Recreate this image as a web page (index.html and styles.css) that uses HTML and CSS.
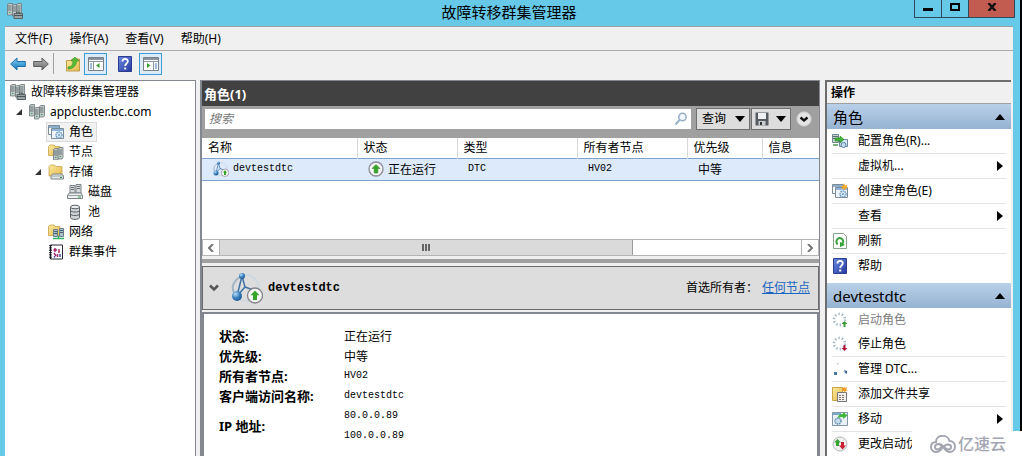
FILE: index.html
```html
<!DOCTYPE html>
<html lang="zh-CN">
<head>
<meta charset="utf-8">
<meta name="viewport" content="width=device-width, initial-scale=1">
<title>故障转移群集管理器</title>
<link rel="stylesheet" href="styles.css">
</head>
<body>
<svg class="sprite" aria-hidden="true">
  <defs>
    <linearGradient id="g-blue" x1="0" y1="0" x2="0" y2="1"><stop offset="0" stop-color="#7fd0f5"/><stop offset="1" stop-color="#1474b8"/></linearGradient>
    <linearGradient id="g-grey" x1="0" y1="0" x2="0" y2="1"><stop offset="0" stop-color="#b5b5b5"/><stop offset="1" stop-color="#6c6c6c"/></linearGradient>
    <linearGradient id="g-fold" x1="0" y1="0" x2="1" y2="1"><stop offset="0" stop-color="#fcecA0"/><stop offset="1" stop-color="#e3b84a"/></linearGradient>
    <linearGradient id="g-help" x1="0" y1="0" x2="1" y2="1"><stop offset="0" stop-color="#6c8be0"/><stop offset="1" stop-color="#2438a0"/></linearGradient>
    <radialGradient id="g-ball" cx=".35" cy=".3" r=".8"><stop offset="0" stop-color="#b8dcf5"/><stop offset=".5" stop-color="#3b82c0"/><stop offset="1" stop-color="#1a4f8c"/></radialGradient>
    <g id="tower"><path d="M.5 1.500 2 .5h3.500v10L4.500 12H.5z" fill="#c3cacb" stroke="#6c7779" stroke-width=".8"/><path d="M1 3h3.500M1 5h3.500M1 7h3.500" stroke="#4f5b5e" stroke-width=".8"/><path d="M2 9.500h1.500" stroke="#35a04a" stroke-width="1.200"/></g>
  </defs>
  <symbol id="i-cluster" viewBox="0 0 16 16"><use href="#tower" x="0" y="0"/><use href="#tower" x="5" y="3"/><use href="#tower" x="10" y="1"/></symbol>
  <symbol id="i-manager" viewBox="0 0 16 16"><use href="#tower" x="0" y="0"/><use href="#tower" x="5" y="1"/><use href="#tower" x="9" y="0"/><path d="M7 10.500h8.500v5H7z" fill="#9aa3a5" stroke="#5a6365"/><path d="M9.500 10.500v-1.500h3.500v1.500M7 12.500h8.500" fill="none" stroke="#4c5557"/></symbol>
  <symbol id="i-roles" viewBox="0 0 16 16"><path d="M.5 1.500h11v9H.5z" fill="#fff" stroke="#7c8b99"/><path d="M1 2h10v2H1z" fill="#8fb0cc"/><path d="M3.500 4.500h12v10h-12z" fill="#eef4fa" stroke="#7c8b99"/><path d="M4 5h11v2H4z" fill="#91b5d8"/><circle cx="11" cy="11" r="3" fill="#d8e8f5" stroke="#6f9cc4" stroke-width="1.500" stroke-dasharray="1.500 .7"/><circle cx="11" cy="11" r="1" fill="#6f9cc4"/></symbol>
  <symbol id="i-newrole" viewBox="0 0 16 16"><use href="#i-roles"/><path d="m12 0 1 2.500 2.500-1-1 2.500 1.500 1-2.500.6-.5 2-1.300-2-2.400.9 1.300-2-2-1.500 2.500-.1z" fill="#f6a625"/></symbol>
  <symbol id="i-nodes" viewBox="0 0 16 16"><path d="M.5 2.500 2 1h4l1 1.500h5v9H.5z" fill="url(#g-fold)" stroke="#c9a14a" stroke-width=".8"/><use href="#tower" x="5" y="4"/><use href="#tower" x="9.500" y="3"/></symbol>
  <symbol id="i-storage" viewBox="0 0 16 16"><path d="M1 2.500 2.500 1h4L8 2.500h6V12H1z" fill="url(#g-fold)" stroke="#c9a14a" stroke-width=".8"/><path d="m4.500 10-1.500 2v3h12.500v-3L14 10z" fill="#e6e9eb" stroke="#7b8285"/><path d="M3 12h12.500" stroke="#9aa1a4"/><path d="M12 13.500h2" stroke="#2f9e3f"/></symbol>
  <symbol id="i-disk" viewBox="0 0 16 16"><path d="M3 1.500h5V9H3zM9 .5h5V9H9z" fill="#d5dadc" stroke="#7b8487"/><path d="M4 3.500h3M10 2.500h3M4 5.500h3M10 4.500h3" stroke="#66706f"/><path d="M2 9h12l1.500 2.500v3H.5v-3z" fill="#eceeef" stroke="#7b8487"/><path d="M.5 11.500h15" stroke="#9aa1a4"/><path d="M11 13h3" stroke="#2f9e3f"/></symbol>
  <symbol id="i-pool" viewBox="0 0 16 16"><path d="M3.500 3v10.500c0 2.500 9 2.500 9 0V3z" fill="#cfd5d7" stroke="#596265"/><ellipse cx="8" cy="3" rx="4.500" ry="1.800" fill="#edf0f1" stroke="#596265"/><path d="M3.500 6.500c0 2 9 2 9 0m-9 3.500c0 2 9 2 9 0" fill="none" stroke="#596265"/></symbol>
  <symbol id="i-network" viewBox="0 0 16 16"><path d="M.5 2.500 2 1h4l1 1.500h5v9H.5z" fill="url(#g-fold)" stroke="#c9a14a" stroke-width=".8"/><path d="M5.500 5.500h4v7h-4zM11.500 4.500h4v8h-4z" fill="#a9bfcb" stroke="#6b7f8b"/><path d="M6 7.500h3M12 6.500h3M6 9.500h3M12 8.500h3" stroke="#4c6472"/><path d="M5 14.500h11M10.500 12v3" stroke="#2db36a" stroke-width="1.500"/></symbol>
  <symbol id="i-events" viewBox="0 0 16 16"><path d="M2.500 1h12v14h-12z" fill="#fff" stroke="#26263a"/><path d="M2.500 1v14" stroke="#111" stroke-width="2.500" stroke-dasharray="1.300 1"/><path d="M7 4v4m-1.500-2H9m2-1v4m-1.500 1v3M6 9l2 3" stroke="#a11f66" stroke-width="1.400"/><path d="M12 10v3M6.500 12v1.500" stroke="#3140a8" stroke-width="1.400"/></symbol>
  <symbol id="i-back" viewBox="0 0 16 14"><path d="M.7 7 7 1v3.500h8.300v5H7V13z" fill="url(#g-blue)" stroke="#1d6fa8"/></symbol>
  <symbol id="i-forward" viewBox="0 0 16 14"><path d="M15.300 7 9 1v3.500H.7v5H9V13z" fill="url(#g-grey)" stroke="#5d5d5d"/></symbol>
  <symbol id="i-up" viewBox="0 0 16 16"><path d="M1.500 4.500H6L7 3h7.500v12h-13z" fill="url(#g-fold)" stroke="#c19b48"/><path d="M3 11c4 0 5-3 5-6H6l4-4 4 4h-2.500c0 4-3 8-8.500 8z" fill="#56bd35" stroke="#368f22" stroke-width=".6"/></symbol>
  <symbol id="i-paneleft" viewBox="0 0 16 14"><path d="M.5.5h15v13H.5z" fill="#fff" stroke="#777f87"/><path d="M1 1h14v2H1z" fill="#8a94a0"/><path d="M1 4.500h14M5.500 5v8.500" stroke="#8a94a0"/><path d="M2 7h2M2 9h2M2 11h2" stroke="#3a78b8"/><path d="M11.500 6v5L8 8.500z" fill="#3a9d2f"/></symbol>
  <symbol id="i-paneright" viewBox="0 0 16 14"><path d="M.5.5h15v13H.5z" fill="#fff" stroke="#777f87"/><path d="M1 1h14v2H1z" fill="#8a94a0"/><path d="M1 4.500h14M10.500 5v8.500" stroke="#8a94a0"/><path d="M12 7h2M12 9h2M12 11h2" stroke="#3a78b8"/><path d="M4 6v5l3.500-2.500z" fill="#3a9d2f"/></symbol>
  <symbol id="i-help" viewBox="0 0 14 16"><path d="M.5.5h13v15H.5z" fill="url(#g-help)" stroke="#2b3b90"/><path d="M4.500 5.500C4.500 2 9.800 2.200 9.800 5.200 9.800 7.500 7.200 7.500 7.200 10" fill="none" stroke="#fff" stroke-width="1.800"/><path d="M6.200 11.500h2v2h-2z" fill="#fff"/></symbol>
  <symbol id="i-search" viewBox="0 0 14 14"><circle cx="8.500" cy="5" r="3.700" fill="#f1f7fc" stroke="#9ab0c6" stroke-width="1.500"/><path d="M5.500 8 1.500 12.500" stroke="#9ab0c6" stroke-width="2"/></symbol>
  <symbol id="i-save" viewBox="0 0 14 14"><path d="M.5.5h13v13H.5z" fill="#555b60"/><path d="M3 1h8v6H3z" fill="#eef0f2"/><path d="M3.500 9h7v4.500h-7z" fill="#c9cdd0"/><path d="M5 10h2v3H5z" fill="#333"/></symbol>
  <symbol id="i-expand" viewBox="0 0 16 16"><circle cx="8" cy="8" r="7.200" fill="#e4e4e4" stroke="#c6c6c6"/><path d="m4.500 6.500 3.500 3 3.500-3" fill="none" stroke="#111" stroke-width="2.400"/></symbol>
  <symbol id="i-running" viewBox="0 0 16 16"><circle cx="8" cy="8" r="7" fill="#f6f6f6" stroke="#8b8b91" stroke-width="1.300"/><path d="m8 3.500 4 4H9.800V12H6.200V7.500H4z" fill="#36a529" stroke="#23801b" stroke-width=".5"/></symbol>
  <symbol id="i-dtc" viewBox="0 0 32 32"><circle cx="15" cy="16" r="13" fill="none" stroke="#cfd9e2" stroke-width="2"/><path d="M9 5C1 10 0 17 4 22" fill="none" stroke="#a3b4c4" stroke-width="2"/><path d="M11 4 6 24M11 4l3 11M6 24l8-9 14 5" fill="none" stroke="#3f72a5" stroke-width="1.500"/><circle cx="11" cy="4" r="3" fill="url(#g-ball)"/><circle cx="6" cy="24" r="5" fill="url(#g-ball)"/><circle cx="24" cy="23.500" r="7.500" fill="#f6f6f6" stroke="#85858b" stroke-width="1.300"/><path d="m24 18.500 4.500 4.700H26V28h-4v-4.800h-2.500z" fill="#36a529"/></symbol>
  <symbol id="i-configure" viewBox="0 0 16 16"><path d="M.5 1.500h6v8h-6z" fill="#ccd9d2" stroke="#6f8790"/><path d="M1 3.500h5M1 5.500h5" stroke="#53706a"/><path d="M7.500 6.500h8v7h-8z" fill="#d9e8f5" stroke="#7189a0"/><path d="M3 5h5V3l4 3.500L8 10V8H3z" fill="#43b23a" stroke="#278421" stroke-width=".6"/><circle cx="11.500" cy="12" r="2.500" fill="#c5dcee" stroke="#557fa5"/><path d="M1 12h5" stroke="#7caf80" stroke-width="2"/></symbol>
  <symbol id="i-refresh" viewBox="0 0 14 16"><path d="M.5.5h10l3 3v12H.5z" fill="#fff" stroke="#87a287"/><path d="M4.500 11.500C1.500 7 6 3.500 9 6c2 2 1.200 4-.2 5.200" fill="none" stroke="#36a33a" stroke-width="2"/><path d="M7 8.800 12 12l-5 2z" fill="#36a33a"/></symbol>
  <symbol id="i-start" viewBox="0 0 16 16"><circle cx="7.500" cy="7.500" r="5.500" fill="none" stroke="#9fb3c3" stroke-width="2.500" stroke-dasharray="1.300 2.155"/><path d="m12.500 9 3 3h-2v3h-2v-3h-2z" fill="#3d9b38"/></symbol>
  <symbol id="i-stop" viewBox="0 0 16 16"><circle cx="7.500" cy="7.500" r="5.500" fill="none" stroke="#9fb3c3" stroke-width="2.500" stroke-dasharray="1.300 2.155"/><path d="m12.500 15 3-3h-2V9h-2v3h-2z" fill="#b21335"/></symbol>
  <symbol id="i-managedtc" viewBox="0 0 16 16"><path d="M5 2h1.500v1.500H5z" fill="#bccbd8"/><path d="M2 11h3v3H2z" fill="#48779d"/><path d="m12 9 3 1v3l-2-1z" fill="#3f6d98"/></symbol>
  <symbol id="i-share" viewBox="0 0 16 16"><path d="M.5 1.500h10v13H.5z" fill="url(#g-fold)" stroke="#caa33f"/><path d="M5.500 6.500h9v9h-9z" fill="#eee" stroke="#777"/><path d="M7 9.500h6M7 11.500h6M7 13.500h6" stroke="#82766d" stroke-dasharray="2 1"/><path d="m12 0 .8 2L15 1l-.8 2.300L16 4.500l-2.300.3L13 7l-1.300-2-2.200.5L11 3.700 9.500 2l2 .1z" fill="#f39b22"/></symbol>
  <symbol id="i-move" viewBox="0 0 16 16"><path d="M.5 1.500h15v13H.5z" fill="#eaf1f6" stroke="#8297a5"/><path d="M1 2h8v2H1z" fill="#7fa9c9"/><circle cx="6" cy="10" r="3" fill="#c9deec" stroke="#6e94b3" stroke-dasharray="1.500 .6" stroke-width="1.500"/><path d="M6 6c1-3 3-3 5-3V1l4.500 3.500L11 8V6C9 6 8 6 6 7z" fill="#42b739"/></symbol>
  <symbol id="i-priority" viewBox="0 0 16 16"><circle cx="8" cy="8" r="7" fill="#f0f0f0" stroke="#b4b7ba"/><path d="m5.500 3 3.500 3.500H7V10H4V6.500H2z" fill="#36a332"/><path d="m10.500 13.500 3.500-4h-2V6H9v3.500H7z" fill="#c81f32"/></symbol>
</svg>

<div class="window">
  <header class="titlebar">
    <svg class="icon"><use href="#i-manager"/></svg>
    <h1 class="titlebar-text">故障转移群集管理器</h1>
    <div class="caption">
      <button class="caption-btn" aria-label="最小化"><svg viewBox="0 0 10 8"><path d="M0 5h10v3H0z"/></svg></button>
      <button class="caption-btn" aria-label="最大化"><svg viewBox="0 0 10 8"><path d="M1 1h8v6H1z" fill="none" stroke="#000" stroke-width="2"/></svg></button>
      <button class="caption-btn caption-close" aria-label="关闭"><svg viewBox="0 0 10 8"><path d="m1.500 0 7 8m0-8-7 8" stroke="#111" stroke-width="2.400"/></svg></button>
    </div>
  </header>

  <div class="client">
    <nav class="menubar">
      <button>文件(F)</button><button>操作(A)</button><button>查看(V)</button><button>帮助(H)</button>
    </nav>
    <div class="toolbar">
      <button class="arrow-btn" aria-label="后退"><svg class="icon"><use href="#i-back"/></svg></button>
      <button class="arrow-btn" aria-label="前进"><svg class="icon"><use href="#i-forward"/></svg></button>
      <span class="divider"></span>
      <button aria-label="上一级"><svg class="icon"><use href="#i-up"/></svg></button>
      <button class="pressed" aria-label="显示控制台树"><svg class="icon"><use href="#i-paneleft"/></svg></button>
      <button class="help" aria-label="帮助"><svg class="icon"><use href="#i-help"/></svg></button>
      <button class="pressed" aria-label="显示操作窗格"><svg class="icon"><use href="#i-paneright"/></svg></button>
    </div>

    <div class="panes">
      <aside class="tree">
        <ul>
          <li class="node level-0"><svg class="icon"><use href="#i-manager"/></svg><span>故障转移群集管理器</span></li>
          <li class="node level-1"><svg class="twisty" viewBox="0 0 6 6"><path d="M6 0v6H0z"/></svg><svg class="icon"><use href="#i-cluster"/></svg><span>appcluster.bc.com</span></li>
          <li class="node level-2"><span class="selected"><svg class="icon"><use href="#i-roles"/></svg><span>角色</span></span></li>
          <li class="node level-2"><svg class="icon"><use href="#i-nodes"/></svg><span>节点</span></li>
          <li class="node level-2 open"><svg class="twisty" viewBox="0 0 6 6"><path d="M6 0v6H0z"/></svg><svg class="icon"><use href="#i-storage"/></svg><span>存储</span></li>
          <li class="node level-3"><svg class="icon"><use href="#i-disk"/></svg><span>磁盘</span></li>
          <li class="node level-3"><svg class="icon"><use href="#i-pool"/></svg><span>池</span></li>
          <li class="node level-2"><svg class="icon"><use href="#i-network"/></svg><span>网络</span></li>
          <li class="node level-2"><svg class="icon"><use href="#i-events"/></svg><span>群集事件</span></li>
        </ul>
      </aside>

      <main class="center">
        <h2 class="center-title">角色(1)</h2>
        <div class="filter">
          <label class="search"><input type="text" placeholder="搜索" aria-label="搜索"><svg class="search-icon"><use href="#i-search"/></svg></label>
          <div class="filter-buttons">
            <button class="drop">查询<svg class="caret" viewBox="0 0 10 6"><path d="M0 0h10L5 6z"/></svg></button>
            <button class="drop drop-save" aria-label="保存查询"><svg class="save"><use href="#i-save"/></svg><svg class="caret" viewBox="0 0 10 6"><path d="M0 0h10L5 6z"/></svg></button>
          </div>
          <button class="expand" aria-label="展开"><svg class="icon"><use href="#i-expand"/></svg></button>
        </div>
        <div class="list">
          <table>
            <colgroup><col class="c-name"><col class="c-state"><col class="c-type"><col class="c-owner"><col class="c-prio"><col></colgroup>
            <thead><tr><th>名称</th><th>状态</th><th>类型</th><th>所有者节点</th><th>优先级</th><th>信息</th></tr></thead>
            <tbody><tr>
              <td><span class="cell"><svg class="icon"><use href="#i-dtc"/></svg>devtestdtc</span></td>
              <td><span class="cell cjk"><svg class="icon"><use href="#i-running"/></svg>正在运行</span></td>
              <td>DTC</td><td>HV02</td><td class="cjk">中等</td><td></td>
            </tr></tbody>
          </table>
        </div>
        <div class="scrollbar">
          <button aria-label="向左滚动"><svg viewBox="0 0 6 8"><path d="M5 0 1 4l4 4"/></svg></button>
          <div class="track"><div class="thumb"><i></i><i></i><i></i></div></div>
          <button aria-label="向右滚动"><svg viewBox="0 0 6 8"><path d="m1 0 4 4-4 4"/></svg></button>
        </div>
        <div class="splitter"></div>
        <section class="summary">
          <svg class="chevron" viewBox="0 0 10 8"><path d="m1 1.500 4 4 4-4"/></svg>
          <svg class="big"><use href="#i-dtc"/></svg>
          <h3>devtestdtc</h3>
          <span class="owners">首选所有者：</span>
          <a href="#owners">任何节点</a>
        </section>
        <section class="details">
          <dl>
            <dt>状态:</dt><dd class="cjk">正在运行</dd>
            <dt>优先级:</dt><dd class="cjk">中等</dd>
            <dt>所有者节点:</dt><dd>HV02</dd>
            <dt>客户端访问名称:</dt><dd>devtestdtc</dd>
            <dt>IP 地址:</dt><dd>80.0.0.89<br>100.0.0.89</dd>
          </dl>
        </section>
      </main>

      <aside class="actions">
        <h2 class="actions-title">操作</h2>
        <h3 class="group">角色<svg class="caret" viewBox="0 0 10 6"><path d="M5 0l5 6H0z"/></svg></h3>
        <ul>
          <li><button><svg class="icon"><use href="#i-configure"/></svg>配置角色(R)...</button></li>
          <li><button><span class="icon"></span>虚拟机...<svg class="arrow" viewBox="0 0 6 10"><path d="M0 0l6 5-6 5z"/></svg></button></li>
          <li><button><svg class="icon"><use href="#i-newrole"/></svg>创建空角色(E)</button></li>
          <li><button><span class="icon"></span>查看<svg class="arrow" viewBox="0 0 6 10"><path d="M0 0l6 5-6 5z"/></svg></button></li>
          <li><button><svg class="icon"><use href="#i-refresh"/></svg>刷新</button></li>
          <li><button><svg class="icon"><use href="#i-help"/></svg>帮助</button></li>
        </ul>
        <h3 class="group second">devtestdtc<svg class="caret" viewBox="0 0 10 6"><path d="M5 0l5 6H0z"/></svg></h3>
        <ul>
          <li class="joined"><button disabled><svg class="icon"><use href="#i-start"/></svg>启动角色</button></li>
          <li><button><svg class="icon"><use href="#i-stop"/></svg>停止角色</button></li>
          <li><button><svg class="icon"><use href="#i-managedtc"/></svg>管理 DTC...</button></li>
          <li><button><svg class="icon"><use href="#i-share"/></svg>添加文件共享</button></li>
          <li><button><svg class="icon"><use href="#i-move"/></svg>移动<svg class="arrow" viewBox="0 0 6 10"><path d="M0 0l6 5-6 5z"/></svg></button></li>
          <li><button><svg class="icon"><use href="#i-priority"/></svg>更改启动优先级</button></li>
        </ul>
      </aside>
    </div>
  </div>
</div>

<div class="brand">
  <svg viewBox="0 0 26 18"><g fill="none" stroke="#a3a6b2" stroke-width="2"><path d="M12 13.500C10 16 8.500 17 6.500 17 3 17 1 14.500 1 12c0-3 2-5 5-5 0-8 12-8 13.500-1C23 6 25 8.500 25 11.500S23 17 19.500 17C15 17 13 9 8.500 9"/><path d="M12 13.500C14 11 15 9.500 18 9.500c4 0 4 5 .5 5-4 0-5-5.500-10-5.500-4.500 0-4.500 5.500-1 5.500 2 0 3-1.500 4.500-3"/></g></svg>
  <span>亿速云</span>
</div>
</body>
</html>
```
FILE: styles.css
```css
* { box-sizing: border-box; }

body {
  margin: 0;
  height: 100vh;
  overflow: hidden;
  background: #000;
  color: #000;
  font: 12px/20px "Noto Sans", "Noto Sans CJK SC", sans-serif;
}

h1, h2, h3, ul, dl, dd { margin: 0; padding: 0; font-weight: normal; }
ul { list-style: none; }
button { margin: 0; padding: 0; border: 0; background: none; color: inherit; font: inherit; }
.sprite { position: absolute; width: 0; height: 0; }
.icon { flex: none; width: 16px; height: 16px; }

.window {
  display: flex;
  flex-direction: column;
  height: 100vh;
  margin-right: 2px;
  padding: 0 7px 0 5px;
  background: #66c9e8;
}

/* title bar */
.titlebar { display: grid; grid-template-columns: 1fr auto 1fr; flex: none; height: 26px; }
.titlebar .icon { margin: 3px 0 0 2px; }
.titlebar-text { font-size: 15px; line-height: 24px; }
.caption { display: flex; justify-self: end; height: 18px; margin-right: -2px; border: 1px solid #2c4a58; border-top: 0; }
.caption-btn { display: grid; place-items: center; width: 27px; padding-bottom: 3px; border-right: 1px solid #2c4a58; }
.caption-btn svg { width: 10px; height: 8px; }
.caption-close { width: 45px; border-right: 0; background: #c35c50; }

.client {
  display: flex;
  flex: 1;
  flex-direction: column;
  min-height: 0;
  border-top: 1px solid #9a9fa2;
  background: #f0f0f0;
}

.menubar { display: flex; flex: none; gap: 17px; height: 24px; padding-left: 10px; border-bottom: 1px solid #ababab; }

.toolbar { display: flex; flex: none; align-items: center; height: 29px; padding: 0 5px 4px; }
.toolbar button { display: grid; place-items: center; width: 23px; height: 22px; }
.toolbar .arrow-btn { width: 16px; margin-right: 7px; }
.toolbar .divider { width: 1px; height: 21px; margin: 0 7px 0 -3px; background: #a0a0a0; }
.toolbar .help { width: 36px; }
.toolbar .pressed { border: 1px solid #3c9bd8; background: #dcebf7; }
.toolbar .help { width: 32px; padding-left: 4px; }

.panes { display: flex; flex: 1; gap: 4px; min-height: 0; padding-right: 2px; }

/* console tree */
.tree { flex: none; width: 191px; padding-top: 1px; border: 1px solid #828790; border-width: 1px 1px 0 0; background: #fff; }
.node { display: flex; align-items: center; gap: 5px; height: 20px; white-space: nowrap; }
.level-0 { padding-left: 5px; }
.level-1 { padding-left: 11px; }
.level-1 .icon { margin-left: 2px; }
.level-2 { padding-left: 43px; }
.level-2.open { padding-left: 30px; }
.level-2.open .icon { margin-left: 2px; }
.level-3 { padding-left: 62px; }
.twisty { width: 6px; height: 6px; fill: #333; }
.selected { display: flex; align-items: center; gap: 5px; margin-left: -2px; padding: 0 3px 0 1px; border: 1px solid #dadada; background: #f2f2f2; line-height: 18px; }

/* roles list */
.center { display: flex; flex: 1; flex-direction: column; min-width: 0; border: 1px solid #828790; border-width: 1px 1px 0 2px; background: #f0f0f0; }
.center-title { flex: none; padding: 3px 2px 2px; background: #414141; color: #fff; font-size: 13px; font-weight: bold; }
.filter { display: flex; flex: none; align-items: center; gap: 5px; height: 32px; padding: 0 7px 6px 3px; background: #a0a0a0; }
.search { display: flex; flex: 1; align-items: center; height: 20px; padding: 0 3px 0 4px; background: #fff; }
.search input { flex: 1; min-width: 0; padding: 0; border: 0; outline: 0; font: inherit; }
.search input::placeholder { color: #777; font-style: italic; }
.search-icon { width: 14px; height: 14px; }
.filter-buttons { display: flex; gap: 1px; }
.drop { display: flex; align-items: center; gap: 9px; height: 22px; padding: 0 4px 0 5px; border: 1px solid #707070; background: #ddd; }
.drop-save { gap: 7px; padding: 0 4px 0 3px; }
.caret { width: 10px; height: 6px; }
.save { width: 14px; height: 14px; }
.expand { display: grid; place-items: center; }

.list { flex: none; min-height: 101px; background: #fff; }
.list table { width: 100%; border-collapse: collapse; table-layout: fixed; }
.c-name { width: 155px; }
.c-state { width: 100px; }
.c-type { width: 120px; }
.c-owner { width: 110px; }
.c-prio { width: 75px; }
.list th { height: 20px; padding: 0 6px; border-right: 1px solid #d9d9d9; font-weight: normal; text-align: left; line-height: 19px; }
.list th:last-child { border-right: 0; }
.list tbody tr { border: 1px solid #7da2ce; border-width: 1px 0; background: #dceafc; }
.list td { height: 22px; padding: 0 11px; font-family: "Liberation Mono", monospace; font-size: 10px; white-space: nowrap; }
.list .cjk, .details .cjk { font-family: "Noto Sans CJK SC", sans-serif; font-size: 12px; }
.cell { display: flex; align-items: center; gap: 4px; }

.scrollbar { display: flex; flex: none; height: 17px; border: 1px solid #b4b4b4; background: #fff; }
.scrollbar button { display: grid; place-items: center; width: 16px; }
.scrollbar button svg { width: 6px; height: 8px; fill: none; stroke: #777; stroke-width: 2; }
.track { flex: 1; border: 1px solid #b4b4b4; border-width: 0 1px; }
.thumb { display: flex; justify-content: center; align-items: center; gap: 1px; width: 71%; height: 100%; border-right: 1px solid #9c9c9c; background: #dadada; }
.thumb i { width: 2px; height: 7px; background: #666; }
.splitter { flex: none; height: 4px; margin: 3px 0; background: #a0a0a0; }

/* selected role */
.summary { display: flex; flex: none; align-items: center; height: 44px; padding: 0 8px 0 6px; border: 1px solid #6b6b6b; background: #ddd; }
.summary h3 { flex: 1; padding-left: 5px; font: bold 12px/20px "Liberation Mono", monospace; }
.summary .chevron { width: 10px; height: 8px; margin-right: 12px; fill: none; stroke: #555; stroke-width: 2.500; }
.summary .big { width: 32px; height: 32px; }
.summary .owners { margin-right: 4px; }
.summary a { color: #1a66c0; }
.details { flex: 1; margin-top: 2px; padding: 12px 15px; border: 2px solid #828790; border-bottom: 0; background: #fff; }
.details dl { display: grid; grid-template-columns: 125px 1fr; align-items: center; }
.details dt { font-size: 13px; font-weight: bold; }
.details dd { font-family: "Liberation Mono", monospace; font-size: 10px; }

/* actions pane */
.actions { flex: none; width: 186px; margin-left: 1px; border: solid #6d6d6d; border-width: 2px 0 0 2px; background: #fff; }
.actions-title { height: 22px; padding-left: 4px; border-bottom: 1px solid #a0a0a0; background: #f0f0f0; font-size: 12px; font-weight: bold; line-height: 21px; }
.group { display: flex; align-items: center; justify-content: space-between; height: 25px; padding: 0 6px; background: linear-gradient(#b9d0e8, #96b3d3); font-size: 15px; }
.second { margin-top: 4px; }
.actions li { margin: 0 5px; border-bottom: 1px solid #e4e4e4; }
.actions li:last-child { border-color: transparent; }
.actions li.joined { border-bottom: 0; }
.actions li button { display: flex; align-items: center; width: 100%; height: 24px; white-space: nowrap; }
.actions li .icon { margin-right: 10px; }
.actions li button:disabled { color: #7d7d7d; }
.actions .arrow { width: 6px; height: 10px; margin: 0 3px 0 auto; }

/* corner badge over the window */
.brand { position: absolute; right: 0; bottom: 0; display: flex; align-items: center; gap: 2px; height: 25px; padding: 0 16px 0 18px; background: #fff; color: #a3a6b2; font: 500 16px/25px "Noto Sans CJK SC", sans-serif; }
.brand svg { width: 26px; height: 18px; }
```
